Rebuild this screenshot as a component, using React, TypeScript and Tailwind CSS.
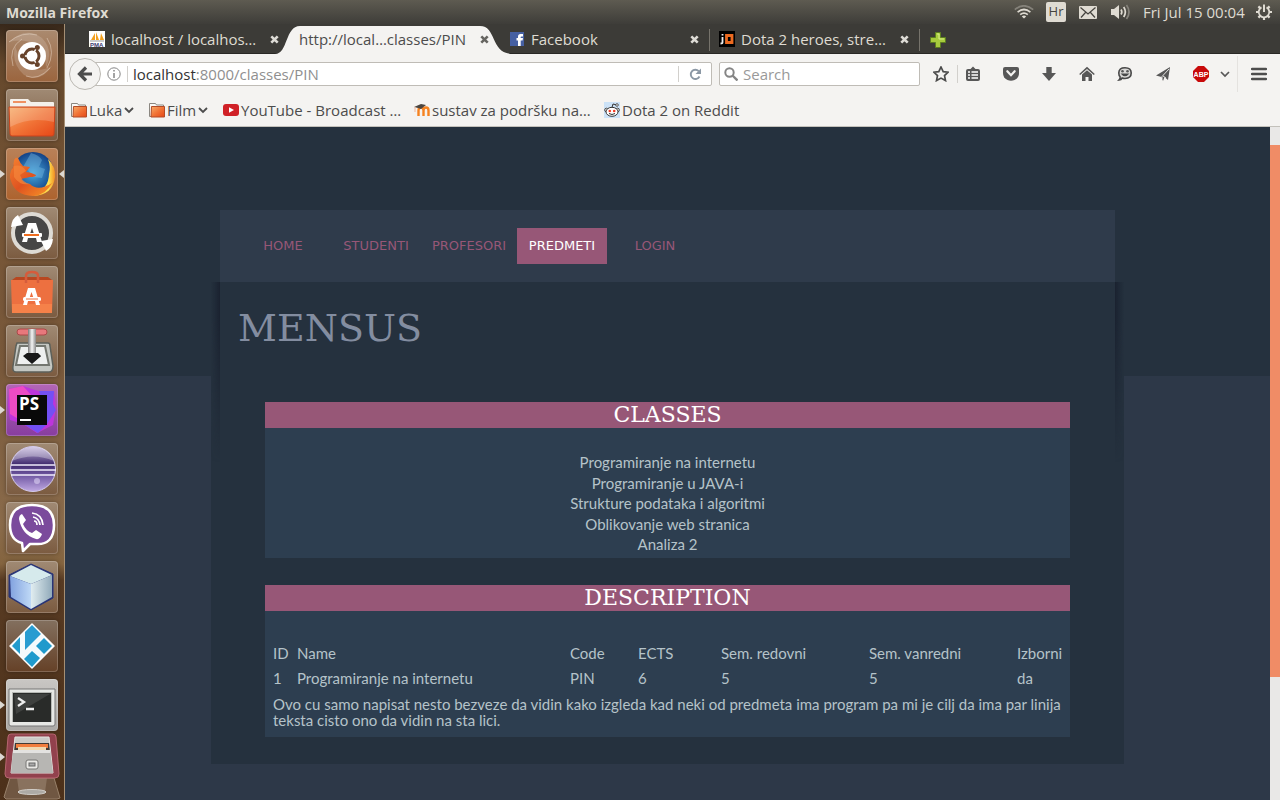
import React from "react";

type Kids = { children?: React.ReactNode };

const ui = "font-['Open_Sans','Noto_Sans',sans-serif]";

/* ---------- system bar ---------- */

function SystemBar() {
  return (
    <header className="flex h-6 shrink-0 items-center bg-linear-to-b from-[#5e5b51] to-[#3e3d39] pr-2 pl-[6px] text-[#dfdbd2]">
      <h1 className="text-[14px] font-bold">Mozilla Firefox</h1>
      <div className="ml-auto flex items-center">
        <svg width="20" height="14" viewBox="0 0 20 14" fill="none" strokeWidth="1.7" aria-hidden="true">
          <path d="M.8 4.6Q10-3 19.200 4.600" stroke="#85827a" />
          <path d="M3.600 7.200Q10 1.800 16.400 7.200M6.200 9.700Q10 6.500 13.800 9.700" stroke="#dfdbd2" />
          <path d="M7.800 11.400Q10 9.800 12.200 11.400L10 13.600Z" fill="#dfdbd2" />
        </svg>
        <span className="ml-3 flex h-5 w-5 items-center justify-center rounded-[2px] bg-[#dfdbd2] text-[13px] text-[#45433e]">Hr</span>
        <svg className="ml-[13px]" width="18" height="13" viewBox="0 0 18 13" aria-hidden="true">
          <rect width="18" height="13" rx="1" fill="#dfdbd2" />
          <path d="M1.500 1.500 9 8l7.500-6.500M2 11.500l4.500-5M16 11.500l-4.500-5" fill="none" stroke="#45433e" strokeWidth="1.200" />
        </svg>
        <svg className="ml-[14px]" width="20" height="16" viewBox="0 0 20 16" fill="none" strokeWidth="1.700" aria-hidden="true">
          <path d="M0 5h3l5-4v14l-5-4H0Z" fill="#dfdbd2" />
          <path d="M10 5.500Q11.700 8 10 10.500M12.700 3Q16 8 12.700 13" stroke="#dfdbd2" />
          <path d="M15.500 1Q20.500 8 15.500 15" stroke="#85827a" />
        </svg>
        <time className="ml-3 w-[101px] whitespace-nowrap text-[15px]">Fri Jul 15 00:04</time>
        <svg className="ml-3" width="16" height="16" viewBox="0 0 16 16" fill="none" stroke="#dfdbd2" aria-hidden="true">
          <path d="M5.500 3.400A5.300 5.300 0 1 0 10.500 3.400" strokeWidth="1.800" />
          <path d="M8 .5v7.500" strokeWidth="2" />
          <path d="M8 13v3M0 8h3M13 8h3M2.400 2.400l2 2M13.600 2.400l-2 2M2.400 13.600l2-2M13.600 13.600l-2-2" strokeWidth="2.200" />
        </svg>
      </div>
    </header>
  );
}

/* ---------- launcher ---------- */

function Tile({ label, tone, running, focused, children }: Kids & { label: string; tone: string; running?: boolean; focused?: boolean }) {
  return (
    <div className="relative flex w-full justify-center pr-[1px]">
      {running && (
        <svg className="absolute top-[21px] left-0" width="5" height="10" viewBox="0 0 5 10" aria-hidden="true">
          <path d="M0 1l5 4-5 4Z" fill="#dcd8d2" />
        </svg>
      )}
      <button aria-label={label} className={`h-[52px] w-[52px] rounded-[4px] shadow-[inset_0_0_0_1px_#ffffff33,0_0_4px_#00000055] ${tone}`}>
        <svg width="52" height="52" viewBox="0 0 52 52" aria-hidden="true">{children}</svg>
      </button>
      {focused && (
        <svg className="absolute top-[21px] right-0" width="5" height="10" viewBox="0 0 5 10" aria-hidden="true">
          <path d="M5 1L0 5l5 4Z" fill="#dcd8d2" />
        </svg>
      )}
    </div>
  );
}

function Launcher() {
  const brown = "bg-linear-to-b from-[#a08a74] to-[#7b5b40]";
  return (
    <nav aria-label="Launcher" className="flex w-[65px] shrink-0 flex-col gap-[7px] border-r border-[#a58f74] bg-[linear-gradient(to_bottom,#38281a_0px,#65482c_40px,#765536_180px,#79593b_350px,#8a6b4b_500px,#84643f_540px,#583b23_556px,#4c3019_776px)] pt-[6px]">
      <Tile label="Search your computer" tone="bg-linear-to-b from-[#aa8a6f] to-[#9b653e]">
        <path d="M3 12Q20-4 36 8Q48 20 40 38Q40 22 30 15Q18 8 3 12Z" fill="#fff" opacity=".16" />
        <path d="M46 36Q34 54 18 45Q5 34 9 16Q13 30 22 37Q33 43 46 36Z" fill="#fff" opacity=".16" />
        <path d="M7 36Q2 18 16 9M41 8Q50 22 41 38M20 46Q32 51 44 38M3 12Q16 1 31 5" fill="none" stroke="#ead8c7" opacity=".5" />
        <circle cx="26" cy="26" r="14" fill="#fff" />
        <circle cx="26" cy="26" r="7" fill="none" stroke="#67432b" strokeWidth="3" />
        <g stroke="#fff" strokeWidth="1.500"><path d="M26 26 16 26M26 26l5-9M26 26l5 9" /></g>
        <circle cx="26" cy="26" r="4.500" fill="#fff" />
        <g fill="#67432b"><circle cx="16.500" cy="26" r="2.500" /><circle cx="31.300" cy="17.500" r="2.500" /><circle cx="31.300" cy="34.500" r="2.500" /></g>
      </Tile>
      <Tile label="Files" tone={brown}>
        <path d="M4 11q0-1 1-1h17l3 3h22q1 0 1 1v7H4Z" fill="#f4f0ea" />
        <path d="M7 12h13v2H7Z" fill="#ef9162" />
        <path d="M3 18h46l-1 27q0 2-2 2H6q-2 0-2-2Z" fill="url(#folder)" stroke="#ca431c" />
        <path d="M4 19h44v14Q24 27 4 38Z" fill="#fff" opacity=".18" />
      </Tile>
      <Tile label="Firefox" tone="bg-linear-to-b from-[#b98158] to-[#ad632e]" running focused>
        <circle cx="27" cy="25" r="21" fill="url(#globe)" />
        <path d="M25 5q8 2 11 7l-3 7 6 2-3 9-9-1-5-7-5-3 4-7Z" fill="#76b6df" opacity=".45" />
        <path d="M42 11q8 8 7 18Q47 47 27 48Q43 40 43 26Q45 19 42 11Z" fill="url(#flame)" />
        <path d="M12 10q-3-1-4 3l-1 6Q2 27 5 33Q9 47 27 48Q40 47 46 35Q32 44 24 36Q17 36 15 31L24 29Q30 29 30 27Q24 24 20 24L24 19L17 18Q14 15 12 10Z" fill="url(#fox)" />
        <path d="M8 18q8-2 12 5l-6 4Q17 35 24 36Q14 38 8 29Z" fill="#f5863b" opacity=".7" />
      </Tile>
      <Tile label="Software Updater" tone={brown}>
        <circle cx="26" cy="26" r="19" fill="#464646" stroke="#dedbd5" strokeWidth="4" />
        <path d="M5 20 17 18 12 8Q6 11 5 20ZM47 32 35 34 40 44Q46 41 47 32Z" fill="#fff" />
        <path d="M22 16h8l6 19h-5l-1-4h-8l-1 4h-5Zm4 5-2 6h4Z" fill="#fff" />
        <rect x="16" y="26" width="20" height="4" rx="1" fill="#fff" /><path d="M18 27h15v2H18Z" fill="#ee6d20" />
      </Tile>
      <Tile label="Software Center" tone={brown}>
        <path d="M6 14 10 11h32l4 3Z" fill="#b84720" />
        <path d="M5 14h42l-1 33H6Z" fill="#ed7040" />
        <path d="M6 38h40v9H6Z" fill="#f58149" />
        <path d="M20 17v-7q0-4 6-4t6 4v7" fill="none" stroke="#d55c3c" strokeWidth="2.500" />
        <path d="M22 22h7l5 17h-4l-1-4h-7l-1 4h-4Zm3.500 4-2 6h4Z" fill="#fff" />
        <rect x="17" y="31" width="18" height="4" rx="1.500" fill="#fff" /><path d="M20 33h12" stroke="#ed7040" />
      </Tile>
      <Tile label="Transmission" tone={brown}>
        <path d="M11 18h31q2 0 2 3l3 20q0 6-4 6H10q-4 0-3-6l3-20Z" fill="#c4c7c2" stroke="#5c605a" strokeWidth="1.500" />
        <path d="M14 21h25l4 19H10Z" fill="#eef0ef" stroke="#73766f" strokeWidth="2" />
        <rect x="11" y="4" width="30" height="6" rx="3" fill="#e8787c" stroke="#aa4949" />
        <path d="M16 28h7v3h-5l8 7 9-7h-5v-3h6" fill="#242424" />
        <path d="M22 4h8v25h-8Z" fill="url(#steel)" /><path d="M21 28h11l3 3-9 8-9-8Z" fill="#181818" />
      </Tile>
      <Tile label="PhpStorm" tone="bg-linear-to-b from-[#b366b6] to-[#883d9f]" running>
        <path d="M3 5 17 2l18 6 13-1 2 16-3 18-16 8-14-9L4 36 2 22Z" fill="#bd35db" />
        <path d="M3 5 17 2l9 10-12 24L4 30Z" fill="#ed4bc4" />
        <path d="M33 7h15l-1 13 3 6-9 14-9 9-16-10 25-7Z" fill="#7350f4" />
        <rect x="11" y="11" width="30" height="30" fill="#090909" />
        <text x="13" y="26" fill="#fff" fontFamily="Open Sans" fontWeight="700" fontSize="17">PS</text>
        <path d="M14 35h11v2H14Z" fill="#fff" />
      </Tile>
      <Tile label="Eclipse" tone={brown}>
        <circle cx="27" cy="26" r="22.500" fill="url(#orb)" stroke="#d4cbed" />
        <path d="M6 18q6-14 22-14t20 14Q27 9 6 18Z" fill="#fff" opacity=".3" />
        <path d="M5 22h44M4 27h46M5 32h44" stroke="#f1edfb" strokeWidth="1.700" />
        <circle cx="31" cy="38" r="3" fill="#eee6ff" opacity=".5" />
      </Tile>
      <Tile label="Viber" tone={brown}>
        <path d="M26 3Q48 3 48 23T30 42h-6l-7 7-1-8Q4 38 4 23Q4 3 26 3Z" fill="#7b4b9c" stroke="#fff" strokeWidth="2.500" strokeLinejoin="round" />
        <path d="M16 12l4 6-3 4q3 7 9 9l4-3 6 4q-2 6-6 5Q16 33 13 17Q13 13 16 12Z" fill="#fff" />
        <path d="M26 11q10 1 11 12M27 15q6 1 7 8M28 19q3 0 3 4" fill="none" stroke="#fff" strokeWidth="1.700" />
      </Tile>
      <Tile label="NetBeans" tone={brown}>
        <path d="M25 3 47 13v24L25 49 3 36V14Z" fill="#283477" stroke="#283477" strokeWidth="1" strokeLinejoin="round" />
        <path d="M25 4 46 14 25 23 4 15Z" fill="#d6eaec" /><path d="M4 15 25 23v25L5 36Z" fill="url(#leftcube)" /><path d="M25 23 46 14v22L25 48Z" fill="url(#rightcube)" />
      </Tile>
      <Tile label="Kodi" tone="bg-linear-to-b from-[#83705f] to-[#654127]">
        <path d="M26 4 48 26 26 48 4 26Z" fill="#f5fafc" stroke="#fff" strokeWidth="1.500" strokeLinejoin="round" />
        <path d="M26 5 35 14 19 30V12Z" fill="#289cd1" /><path d="M14 17v17l-8-8Z" fill="#239bcd" />
        <path d="M38 18 46 26 38 34 30 26ZM26 31 34 38 26 47 18 39Z" fill="#209acc" />
      </Tile>
      <Tile label="Terminal" tone="bg-linear-to-b from-[#c9c7c4] to-[#aaa8a5]" running>
        <path d="M3 10h46v35q0 2-2 2H5q-2 0-2-2Z" fill="#e7e8e5" stroke="#777" />
        <path d="M6 13h40v30H6Z" fill="#b6b8b4" /><path d="M7 14h38v29H7Z" fill="#292b29" />
        <path d="M8 15h36L10 35Z" fill="#fff" opacity=".1" />
        <path d="m12 19 6 4-6 4M20 30h8" fill="none" stroke="#eee" strokeWidth="2.300" />
      </Tile>
      <button aria-label="File cabinet and trash" className="-mt-[7px] h-[69px] w-16">
        <svg width="64" height="69" viewBox="0 0 64 69" aria-hidden="true">
          <path d="M0 22l5 4-5 4Z" fill="#dcd8d2" />
          <path d="M10 47h44l6 20-3 1H6l-2-2Z" fill="#705742" stroke="#98816a" />
          <path d="M17 47h30l-2 14H19Z" fill="#a28d79" opacity=".5" /><ellipse cx="32" cy="61" rx="14" ry="2.500" fill="#adaaa5" stroke="#d1cdc7" />
          <path d="M11 3h42q3 0 3 3l3 37q0 4-4 4H9q-4 0-4-4L8 6q0-3 3-3Z" fill="#92414d" stroke="#b76670" />
          <path d="M15 6h34l4 36H11Z" fill="#cbcac7" stroke="#e4e3e0" /><path d="M15 12h34l1 9H14Z" fill="#423a36" />
          <path d="M16 13h32v4H16Z" fill="#f07d3e" /><path d="M18 16h28v4H18Z" fill="#f0d8b1" />
          <path d="M13 19h37l3 23H11Z" fill="#b7b6b3" /><path d="M13 19h37v3H13Z" fill="#e3e2e0" />
          <rect x="26" y="29" width="12" height="9" rx="2" fill="#e9e8e5" stroke="#777674" /><rect x="29" y="32" width="6" height="3" fill="#aaa" stroke="#666" />
        </svg>
      </button>
      <svg width="0" height="0" className="absolute" aria-hidden="true">
        <defs>
          <linearGradient id="folder" x1="0" y1="0" x2="1" y2="1"><stop stopColor="#f7ad6b" /><stop offset=".5" stopColor="#f17437" /><stop offset="1" stopColor="#e64716" /></linearGradient>
          <radialGradient id="globe"><stop stopColor="#46a9de" /><stop offset="1" stopColor="#134287" /></radialGradient>
          <linearGradient id="flame" x2="1"><stop stopColor="#f79821" /><stop offset=".7" stopColor="#ffe553" /><stop offset="1" stopColor="#f18b22" /></linearGradient>
          <linearGradient id="fox" x2="1" y2="1"><stop stopColor="#f48130" /><stop offset=".5" stopColor="#df5320" /><stop offset="1" stopColor="#f99829" /></linearGradient>
          <linearGradient id="steel"><stop stopColor="#777" /><stop offset=".5" stopColor="#f5f5f5" /><stop offset="1" stopColor="#888" /></linearGradient>
          <linearGradient id="orb" x2="0" y2="1"><stop stopColor="#c6b8df" /><stop offset=".4" stopColor="#3f2a6d" /><stop offset=".65" stopColor="#725aa4" /><stop offset="1" stopColor="#c0a9e3" /></linearGradient>
          <linearGradient id="leftcube" x2="1"><stop stopColor="#82a2df" /><stop offset="1" stopColor="#bfd9f6" /></linearGradient>
          <linearGradient id="rightcube" x2="1"><stop stopColor="#e1edf0" /><stop offset="1" stopColor="#91aaba" /></linearGradient>
        </defs>
      </svg>
    </nav>
  );
}

/* ---------- tab strip ---------- */

function CloseMark({ light }: { light?: boolean }) {
  return (
    <svg width="9" height="9" viewBox="0 0 9 9" aria-hidden="true">
      <path d="M1.300 1.300l6.400 6.400M7.700 1.300l-6.400 6.400" stroke={light ? "#dedcd6" : "#666561"} strokeWidth="2.600" />
    </svg>
  );
}

function Tab({ title, icon, active, divided }: { title: string; icon?: React.ReactNode; active?: boolean; divided?: boolean }) {
  return (
    <div className={`relative flex h-[30px] w-[210px] items-center pr-[10px] pl-[10px] ${active ? "z-10 text-[#4c4c4c]" : "text-[#dfdbd2]"}`}>
      {active && (
        <svg className="absolute top-[2px] -left-[14px]" width="238" height="29" viewBox="0 0 238 29" aria-hidden="true">
          <path d="M0 28C13 28 10 0 25 0H205C222 0 215 28 238 28V29H0Z" fill="#f4f3f1" />
        </svg>
      )}
      {icon && <span className="mr-[6px] w-4 shrink-0">{icon}</span>}
      <button role="tab" aria-selected={!!active} className="relative mt-[2px] min-w-0 flex-1 text-left text-[15px] whitespace-nowrap">{title}</button>
      <button aria-label={`Close ${title}`} className="relative mt-[2px]"><CloseMark light={!active} /></button>
      {divided && <span className="absolute top-[5px] -right-[1px] h-[22px] w-px bg-[#76736b]" />}
    </div>
  );
}

function TabStrip() {
  return (
    <div role="tablist" className="flex h-[30px] items-center border-b border-[#292825] bg-[#3c3b37] pl-[14px]">
      <Tab title="localhost / localhos…" icon={
        <svg width="16" height="16" viewBox="0 0 16 16"><path d="M0 0h16v16H0Z" fill="#fff" /><path d="M2 9 6 2v7ZM7 9V1l3 8ZM11 9l1-7 3 7Z" fill="#f3a01d" /><path d="M1 10h14" stroke="#999" /><text x="1" y="15.500" fontSize="6" fontWeight="700" fontFamily="Liberation Sans" fill="#3b3b72">PMA</text></svg>
      } />
      <Tab title="http://local…classes/PIN" active />
      <Tab title="Facebook" divided icon={
        <svg width="16" height="16" viewBox="0 0 16 16"><path d="M1 1h14v14H1Z" fill="#4660a2" /><path d="M9 15V9.500H7.500V7H9V5.500Q9 3 11.500 3H14v2.500h-1.500q-.8 0-.8.800V7H14l-.4 2.500h-1.900V15Z" fill="#fff" /></svg>
      } />
      <Tab title="Dota 2 heroes, stre…" divided icon={
        <svg width="16" height="16" viewBox="0 0 16 16"><path d="M0 0h16v16H0Z" /><path d="M3.500 3v1.500M3.500 6v5.500q0 1-2 1" fill="none" stroke="#eee" strokeWidth="1.800" /><path d="M7.500 4.500H13v7H7.500Z" fill="none" stroke="#ec6a20" strokeWidth="2.800" /></svg>
      } />
      <button aria-label="New tab" className="mt-[2px] ml-[11px]">
        <svg width="16" height="16" viewBox="0 0 16 16"><path d="M5.500.5h5v5h5v5h-5v5h-5v-5h-5v-5h5Z" fill="#a7cb3d" stroke="#5d7e20" /><path d="M7 2h2v5h5" fill="none" stroke="#d8ec8c" /></svg>
      </button>
    </div>
  );
}

/* ---------- toolbars ---------- */

function ToolButton({ label, size, children }: Kids & { label: string; size: string }) {
  return <button aria-label={label} className={`flex h-6 shrink-0 items-center justify-center ${size}`}><svg className="shrink-0" width="16" height="16" viewBox="0 0 16 16" fill="#575757" aria-hidden="true">{children}</svg></button>;
}

function NavigationBar() {
  return (
    <div className="flex h-10 items-center bg-[#f4f3f1] pl-1">
      <button aria-label="Back" className="z-10 flex h-8 w-8 shrink-0 items-center justify-center rounded-full border border-[#bbb8b2] bg-[#f4f3f1]">
        <svg width="16" height="16" viewBox="0 0 16 16" aria-hidden="true"><path d="M9 1.500 2.500 8 9 14.500M3 8h12" fill="none" stroke="#4d4d4d" strokeWidth="3.200" /></svg>
      </button>
      <div className="-ml-4 flex h-6 min-w-0 flex-1 items-center rounded-[2px] border border-[#bfbcb6] bg-white pl-5">
        <button aria-label="Site information" className="ml-[1px] shrink-0">
          <svg width="14" height="14" viewBox="0 0 14 14" fill="none" stroke="#858585"><circle cx="7" cy="7" r="6.200" /><path d="M7 3v1.600M7 6v5" strokeWidth="1.500" /></svg>
        </button>
        <span className="mx-[6px] h-4 w-px shrink-0 bg-[#d2d0cc]" />
        <div className="relative -ml-px min-w-0 flex-1 text-[15px] leading-[22px]">
          <input aria-label="Address" defaultValue="localhost:8000/classes/PIN" className="block w-full bg-transparent text-[#8f8f8f] outline-none" />
          <span aria-hidden="true" className="pointer-events-none absolute top-0 left-0 bg-white text-[#333]">localhost</span>
        </div>
        <button aria-label="Reload" className="flex h-4 w-[33px] shrink-0 items-center justify-center border-l border-[#d2d0cc]">
          <svg width="13" height="13" viewBox="0 0 13 13"><path d="M10.500 8.500A4.600 4.600 0 1 1 9.700 3.200" fill="none" stroke="#8b98a5" strokeWidth="1.900" /><path d="M12 .5v5.500H6.500Z" fill="#8b98a5" /></svg>
        </button>
      </div>
      <label className="ml-[7px] flex h-6 w-[201px] shrink-0 items-center rounded-[2px] border border-[#bfbcb6] bg-white pl-1">
        <svg width="14" height="14" viewBox="0 0 14 14" fill="none" stroke="#858585" aria-hidden="true"><circle cx="5.500" cy="5.500" r="4.200" strokeWidth="2" /><path d="m8.500 8.500 5 5" strokeWidth="2.400" /></svg>
        <input aria-label="Search" placeholder="Search" className="ml-[5px] min-w-0 flex-1 bg-transparent text-[15px] leading-[22px] outline-none placeholder:text-[#999]" />
      </label>
      <div className="ml-[5px] flex shrink-0 items-center">
        <ToolButton label="Bookmark this page" size="w-8"><path d="m8 1 2.200 4.600 5 .6-3.700 3.400 1 5L8 12.100l-4.500 2.500 1-5L.8 6.200l5-.6Z" fill="none" stroke="#4c4c4c" strokeWidth="1.700" /></ToolButton>
        <span className="h-[18px] w-px bg-[#d2d0cc]" />
        <ToolButton label="Bookmarks list" size="w-[30px]"><path d="M3 3h2.500L8 .5 10.500 3H13q2 0 2 2v8q0 2-2 2H3q-2 0-2-2V5q0-2 2-2Z" /><path d="M3 6h2M6.500 6H13M3 9h2M6.500 9H13M3 12h2M6.500 12H13" stroke="#fff" strokeWidth="1.500" /></ToolButton>
        <span className="w-1" />
        <ToolButton label="Pocket" size="w-[38px]"><path d="M2 1h12q2 0 2 2v4q0 5-4.500 7Q8 15.500 4.500 14 0 12 0 7V3q0-2 2-2Z" /><path d="m4.300 5.200 3.700 4 3.700-4" fill="none" stroke="#f4f3f1" strokeWidth="2.200" strokeLinecap="round" /></ToolButton>
        <ToolButton label="Downloads" size="w-[38px]"><path d="M5.300 1h5.400v6H15l-7 8-7-8h4.300Z" /></ToolButton>
        <ToolButton label="Home" size="w-[38px]"><path d="M8 .7 15.800 8l-1 1L8 3 1.200 9l-1-1ZM3 8.500l5-4.300 5 4.300V15h-3.500v-4h-3v4H3Z" /></ToolButton>
        <ToolButton label="Hello" size="w-[38px]"><path d="M8 1.800q6.200 0 6.200 5.200T8 12.500q-1.800 0-2.800-.5-1 1.800-3.200 2 1.300-1.400 1.100-3.200Q1.800 9.500 1.800 7q0-5.200 6.200-5.200Z" fill="#d9d8d6" stroke="#484848" strokeWidth="1.600" /><circle cx="5.500" cy="5.300" r="1.300" /><circle cx="10.500" cy="5.300" r="1.300" /><path d="M3.500 7.500h9Q8 13 3.500 7.500Z" fill="#484848" /></ToolButton>
        <ToolButton label="Share" size="w-[38px]"><path d="M15 1 13 14l-3.500-3L8 15l-1.500-4L1 9.500Z" /><path d="M14 3 7 10.500V13M8 10l3 2" fill="none" stroke="#f4f3f1" strokeWidth=".9" /></ToolButton>
        <ToolButton label="Adblock Plus" size="w-[38px]"><path d="M5 0h6l5 5v6l-5 5H5l-5-5V5Z" fill="#c80a0a" /><text x="8" y="10.800" textAnchor="middle" fontFamily="Liberation Sans" fontWeight="700" fontSize="7" fill="#fff">ABP</text></ToolButton>
        <ToolButton label="Adblock menu" size="w-[10px]"><path d="m4 6 4 4 4-4" fill="none" stroke="#575757" strokeWidth="1.700" /></ToolButton>
        <span className="ml-[7px] h-9 w-px bg-[#e4e2df]" />
        <ToolButton label="Open menu" size="w-[42px]"><path d="M1 3h14M1 8h14M1 13h14" stroke="#4d4d4d" strokeWidth="2.400" strokeLinecap="round" /></ToolButton>
      </div>
    </div>
  );
}

function FolderGlyph() {
  return <svg className="shrink-0" width="16" height="16" viewBox="0 0 16 16" aria-hidden="true"><path d="M.5 14.500v-13h6l1 1.500h7v11.500Z" fill="#faf9f7" stroke="#8b8781" /><path d="M2.500 4.500h13V15H2Z" fill="url(#folder)" stroke="#b24c28" /></svg>;
}

function Chevron() {
  return <svg width="10" height="7" viewBox="0 0 10 7" aria-hidden="true"><path d="m1 1 4 4 4-4" fill="none" stroke="#4c4c4c" strokeWidth="1.800" /></svg>;
}

function BookmarksBar() {
  const item = "flex shrink-0 items-center gap-[2px] whitespace-nowrap";
  return (
    <div className="flex h-[33px] items-center border-b border-[#c3c1bb] bg-[#f4f3f1] pl-[6px] text-[15px] text-[#4c4c4c]">
      <button className={`${item} w-[78px]`}><FolderGlyph />Luka<Chevron /></button>
      <button className={`${item} w-[74px]`}><FolderGlyph />Film<Chevron /></button>
      <a href="#youtube" className={`${item} w-[191px]`}>
        <svg width="16" height="16" viewBox="0 0 16 16" aria-hidden="true"><rect y="2" width="16" height="12" rx="3" fill="#d02127" /><path d="M6 5.200v5.600L11 8Z" fill="#fff" /></svg>YouTube - Broadcast …
      </a>
      <a href="#sustav" className={`${item} w-[190px]`}>
        <svg width="16" height="16" viewBox="0 0 16 16" aria-hidden="true"><path d="M4.500 14V8.500Q4.500 5.500 7 5.500T9.500 8.500V14M9.500 8.500Q9.500 5.500 12 5.500T14.500 8.500V14" fill="none" stroke="#f58220" strokeWidth="2.400" /><path d="M0 5 7 2l5 1-5 4-3-1Z" fill="#4b4540" /><path d="M1 5v5" stroke="#f2b59a" /></svg>sustav za podršku na…
      </a>
      <a href="#reddit" className={item}>
        <svg width="16" height="16" viewBox="0 0 16 16" aria-hidden="true"><path d="M0 0h16v16H0Z" fill="#cce2f7" /><circle cx="2.500" cy="8" r="1.800" fill="#fff" stroke="#444" /><circle cx="13.500" cy="8" r="1.800" fill="#fff" stroke="#444" /><ellipse cx="8" cy="9.800" rx="6" ry="4.500" fill="#fff" stroke="#333" /><path d="M8 5.500 9 2l4 1M5 11.500q3 2 6 0" fill="none" stroke="#333" /><circle cx="13" cy="3" r="1.300" fill="#fff" stroke="#333" strokeWidth=".8" /><circle cx="5.800" cy="9" r="1.300" fill="#f33b24" /><circle cx="10.200" cy="9" r="1.300" fill="#f33b24" /></svg>Dota 2 on Reddit
      </a>
    </div>
  );
}

/* ---------- page ---------- */

const links = ["HOME", "STUDENTI", "PROFESORI", "PREDMETI", "LOGIN"];
const classes = ["Programiranje na internetu", "Programiranje u JAVA-i", "Strukture podataka i algoritmi", "Oblikovanje web stranica", "Analiza 2"];
const columns = ["ID", "Name", "Code", "ECTS", "Sem. redovni", "Sem. vanredni", "Izborni"];
const values = ["1", "Programiranje na internetu", "PIN", "6", "5", "5", "da"];

function Panel({ title, children }: Kids & { title: string }) {
  return (
    <section className="bg-[#2d3e50]">
      <h2 className="bg-[#975777] text-center font-['DejaVu_Serif',serif] text-[22px] leading-[26px] text-white">{title}</h2>
      {children}
    </section>
  );
}

function Page() {
  return (
    <main className="min-w-0 flex-1 bg-[linear-gradient(to_bottom,#25313e_249px,#2d3848_249px)] px-4 pt-[83px] pb-9 font-['Lato',sans-serif] text-[15px] text-[#b5c3c9]">
      <div className="mx-auto w-full max-w-[913px]">
        <nav className="mx-[9px] flex h-[72px] items-center gap-[3px] bg-[#2f3b4b] px-[18px] font-['DejaVu_Sans',sans-serif] text-[13px]">
          {links.map((l) => (
            <a key={l} href={`#${l.toLowerCase()}`} className={`flex h-9 w-[90px] items-center justify-center ${l === "PREDMETI" ? "bg-[#975777] text-white" : "text-[#975777]"}`}>{l}</a>
          ))}
        </nav>
        <div className="flex bg-[#25313e]">
          <div className="h-[180px] w-[9px] shrink-0 bg-linear-to-l from-[#1a2230] to-transparent mask-b-from-20%" />
          <div className="min-w-0 flex-1 pb-[27px]">
            <div className="h-[120px] pt-[23px] pl-[18px]">
              <h1 className="font-['DejaVu_Serif',serif] text-[38px] leading-[46px] text-[#838da0]">MENSUS</h1>
            </div>
            <div className="flex flex-col gap-[27px] px-[45px]">
              <Panel title="CLASSES">
                <ul className="grid h-[130px] grid-rows-5 items-center pt-[24px] pb-[3px] text-center">
                  {classes.map((c) => <li key={c}><a href="#description">{c}</a></li>)}
                </ul>
              </Panel>
              <Panel title="DESCRIPTION">
                <div className="px-[8px] pt-[30px] pb-[9px]">
                  <table className="w-full table-fixed border-collapse text-left">
                    <colgroup>
                      <col className="w-[24px]" /><col className="w-[273px]" /><col className="w-[68px]" /><col className="w-[83px]" /><col className="w-[148px]" /><col className="w-[148px]" /><col />
                    </colgroup>
                    <thead><tr className="h-[25px]">{columns.map((c) => <th key={c} className="p-0 font-normal whitespace-nowrap">{c}</th>)}</tr></thead>
                    <tbody>
                      <tr className="h-[25px]">{values.map((v, i) => <td key={i} className="p-0 whitespace-nowrap">{v}</td>)}</tr>
                      <tr><td colSpan={7} className="pt-[5px] leading-4">Ovo cu samo napisat nesto bezveze da vidin kako izgleda kad neki od predmeta ima program pa mi je cilj da ima par linija teksta cisto ono da vidin na sta lici.</td></tr>
                    </tbody>
                  </table>
                </div>
              </Panel>
            </div>
          </div>
          <div className="h-[180px] w-[9px] shrink-0 bg-linear-to-r from-[#1a2230] to-transparent mask-b-from-20%" />
        </div>
      </div>
    </main>
  );
}

export default function App() {
  return (
    <div className={`flex min-h-screen flex-col ${ui}`}>
      <SystemBar />
      <div className="flex flex-1">
        <Launcher />
        <div className="flex min-w-0 flex-1 flex-col">
          <TabStrip />
          <NavigationBar />
          <BookmarksBar />
          <div className="flex flex-1">
            <Page />
            <div className="w-[10px] shrink-0 bg-[#e9e8e7] pt-[18px]"><div className="h-[532px] bg-[#f08c66]" /></div>
          </div>
        </div>
      </div>
    </div>
  );
}
